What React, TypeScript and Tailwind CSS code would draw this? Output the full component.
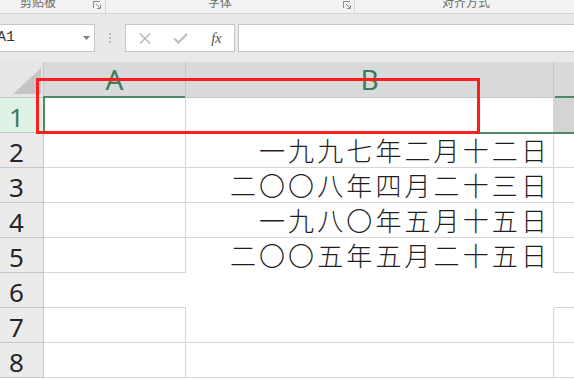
import React from "react";

type Row = {
  n: string;
  text: string;
  a: string;
  b: string;
  c: string;
};

const rows: Row[] = [
  { n: "1", text: "", a: "border-r border-b", b: "border-r border-b", c: "border-b bg-[#d4d4d4]" },
  { n: "2", text: "一九九七年二月十二日", a: "border-r border-b", b: "border-r border-b", c: "border-b" },
  { n: "3", text: "二〇〇八年四月二十三日", a: "border-r border-b", b: "border-r border-b", c: "border-b" },
  { n: "4", text: "一九八〇年五月十五日", a: "border-r border-b", b: "border-r border-b", c: "border-b" },
  { n: "5", text: "二〇〇五年五月二十五日", a: "border-r border-b", b: "border-r", c: "border-b" },
  // 6행은 A 오른쪽, B 테두리가 비어 있음
  { n: "6", text: "", a: "border-b", b: "", c: "border-b" },
  { n: "7", text: "", a: "border-r border-b", b: "border-r border-b", c: "border-b" },
  { n: "8", text: "", a: "border-r border-b", b: "border-r border-b", c: "border-b" },
];

const Launcher = () => (
  <svg width="8" height="8" viewBox="0 0 8 8" fill="none" stroke="#8a8a8a" strokeWidth="1">
    <path d="M0.5 7V0.5H7" />
    <path d="M3 3l4 4" />
    <path d="M7.5 4v3.5H4" />
  </svg>
);

const App: React.FC = () => {
  return (
    <div className="w-[574px] h-[379px] overflow-hidden bg-white font-['Noto_Sans',sans-serif]">
      {/* 리본 그룹 이름 */}
      <div className="h-[14px] flex bg-[#f3f3f3] border-b border-[#d6d6d6] text-[12px] leading-[12px] text-[#6b6b6b] font-['Noto_Sans_CJK_SC',sans-serif] overflow-hidden">
        <div className="w-[106px] flex items-start border-r border-[#d6d6d6] pl-[20px] pr-[4px]">
          <span className="-mt-1">剪贴板</span>
          <span className="ml-auto mt-[1px]">
            <Launcher />
          </span>
        </div>
        <div className="w-[249px] flex items-start border-r border-[#d6d6d6] pl-[102px] pr-[3px]">
          <span className="-mt-1">字体</span>
          <span className="ml-auto mt-[1px]">
            <Launcher />
          </span>
        </div>
        <div className="pl-[87px]">
          <span className="block -mt-1">对齐方式</span>
        </div>
      </div>

      {/* 수식 입력줄 */}
      <div className="h-[48px] bg-[#e9e9e9] pt-[10px]">
        <div className="flex h-[28px]">
          <div className="w-[95px] flex items-center bg-white border border-l-0 border-[#c6c6c6]">
            <span className="-ml-[3px] text-[15px] text-[#333] font-['Liberation_Mono',monospace]">A1</span>
            <svg className="ml-auto mr-[4px]" width="7" height="4" viewBox="0 0 7 4">
              <path d="M0 0h7L3.5 4z" fill="#7f7f7f" />
            </svg>
          </div>
          <div className="w-[30px] flex flex-col items-center justify-center gap-[2px]">
            <span className="w-[2px] h-[2px] bg-[#b8b8b8]" />
            <span className="w-[2px] h-[2px] bg-[#b8b8b8]" />
            <span className="w-[2px] h-[2px] bg-[#b8b8b8]" />
          </div>
          <div className="w-[110px] flex items-center pl-[1px] bg-white border border-[#c6c6c6]">
            <div className="w-[36px] flex justify-center">
              <svg width="12" height="11" viewBox="0 0 12 11" stroke="#b4b4b4" strokeWidth="1.3">
                <path d="M1 0.5l10 10M11 0.5l-10 10" />
              </svg>
            </div>
            <div className="w-[36px] flex justify-center">
              <svg width="15" height="11" viewBox="0 0 15 11" fill="none" stroke="#bdbdbd" strokeWidth="2.2">
                <path d="M1 5.5l4.5 4L14 1" />
              </svg>
            </div>
            <div className="w-[36px] flex justify-center">
              <span className="text-[15px] italic text-[#555] font-['Liberation_Serif',serif] tracking-[-0.5px]">fx</span>
            </div>
          </div>
          <div className="flex-1 ml-[3px] bg-white border border-r-0 border-[#c6c6c6]" />
        </div>
      </div>

      {/* 시트 */}
      <div className="relative">
        <div className="flex h-[36px]">
          <div className="w-[44px] flex items-end justify-end pr-[2px] pb-[3px] bg-[#e6e6e6] border-r border-b border-[#c6c6c6]">
            <svg width="28" height="26" viewBox="0 0 28 26">
              <path d="M28 0V26H0z" fill="#c4c4c4" />
            </svg>
          </div>
          <div className="w-[142px] flex items-center justify-center bg-[#dadada] border-r border-b border-[#c6c6c6] text-[28px] leading-[35px] text-[#3d7d5b]">
            A
          </div>
          <div className="w-[368px] flex items-center justify-center bg-[#dadada] border-r border-b border-[#c6c6c6] text-[28px] leading-[35px] text-[#3d7d5b]">
            B
          </div>
          <div className="flex-1 bg-[#dadada] border-b border-[#c6c6c6]" />
        </div>

        {rows.map((r) => (
          <div key={r.n} className="flex h-[35px]">
            <div
              className={
                r.n === "1"
                  ? "w-[44px] pl-[9px] pt-[5px] text-[26px] leading-[29px] bg-[#e0f1e6] text-[#3d7d5b] border-r border-b border-[#c6c6c6]"
                  : "w-[44px] pl-[9px] pt-[5px] text-[26px] leading-[29px] bg-[#ebebeb] text-[#262626] border-r border-b border-[#c6c6c6]"
              }
            >
              {r.n}
            </div>
            <div className={`w-[142px] border-[#d6d6d6] ${r.a}`} />
            <div
              className={`w-[368px] flex items-center justify-end pr-[3px] pb-[1px] border-[#d6d6d6] text-[26px] leading-[26px] tracking-[3.1px] text-[#1f1f1f] font-extralight font-['Noto_Sans_CJK_SC',sans-serif] ${r.b}`}
            >
              {r.text}
            </div>
            <div className={`flex-1 border-[#d6d6d6] ${r.c}`} />
          </div>
        ))}

        {/* 선택 영역 테두리 */}
        <div className="absolute left-[44px] top-[34px] w-[141px] h-[2px] bg-[#4b8a68]" />
        <div className="absolute left-[43px] top-[34px] w-[2px] h-[38px] bg-[#4b8a68]" />
        <div className="absolute left-[43px] top-[70px] w-[531px] h-[2px] bg-[#4b8a68]" />
        <div className="absolute left-[555px] top-[34px] w-[19px] h-[2px] bg-[#4b8a68]" />

        {/* 빨간 표시 상자 */}
        <div className="absolute left-[36px] top-[16px] w-[444px] h-[56px] border-[3px] border-[#ff1c1c]" />
      </div>
    </div>
  );
};

export default App;
